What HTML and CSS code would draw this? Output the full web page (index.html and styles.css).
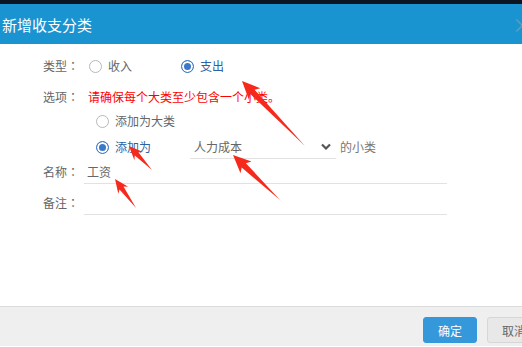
FILE: index.html
```html
<!DOCTYPE html>
<html lang="zh-CN">
<head>
    <meta charset="UTF-8">
    <meta name="viewport" content="width=device-width, initial-scale=1.0">
    <title>新增收支分类</title>
    <link rel="stylesheet" href="styles.css">
</head>
<body>
    <div class="page">
        <div class="topbar"></div>
        <div class="dialog">
            <div class="dialog-head">
                <span class="dialog-title">新增收支分类</span>
                <span class="close">×</span>
            </div>
            <div class="dialog-body">
                <div class="row row-type">
                    <span class="label">类型<span class="colon" lang="zh-TW">：</span></span>
                    <label class="opt opt-first"><span class="radio"></span>收入</label>
                    <label class="opt on"><span class="radio"></span>支出</label>
                </div>
                <div class="row row-tip">
                    <span class="label">选项<span class="colon" lang="zh-TW">：</span></span>
                    <span class="tip">请确保每个大类至少包含一个小类。</span>
                </div>
                <div class="row row-sub">
                    <span class="label"></span>
                    <label class="opt opt-sub"><span class="radio"></span>添加为大类</label>
                </div>
                <div class="row row-sub2">
                    <span class="label"></span>
                    <label class="opt opt-sub on"><span class="radio"></span>添加为</label>
                    <div class="select">
                        <span>人力成本</span>
                        <svg class="chevron" width="10" height="7" viewBox="0 0 10 7"><polyline points="1,1.5 5,5.5 9,1.5" fill="none" stroke="#555" stroke-width="2.2"/></svg>
                    </div>
                    <span class="suffix">的小类</span>
                </div>
                <div class="row row-name">
                    <span class="label">名称<span class="colon" lang="zh-TW">：</span></span>
                    <div class="field">工资</div>
                </div>
                <div class="row row-note">
                    <span class="label">备注<span class="colon" lang="zh-TW">：</span></span>
                    <div class="field"></div>
                </div>
            </div>
            <div class="dialog-foot">
                <button class="btn btn-ok">确定</button>
                <button class="btn btn-cancel">取消</button>
            </div>
        </div>

        <!-- red annotation arrows drawn on top of the dialog -->
        <svg class="marks" width="522" height="347" viewBox="0 0 522 347">
            <polygon points="242,81 260.3,88.3 254.6,89.7 305,146 250.3,93.9 248.8,99.5"/>
            <polygon points="233,155 251.5,161.6 245.9,163.2 280,200 241.7,167.6 240.5,173.2"/>
            <polygon points="129,146 143,151.9 138.4,152.2 152,170 134.8,155.6 134.4,160.2"/>
            <polygon points="115,179 128.1,186.8 123.5,186.4 136,208 119.5,189.4 118.3,193.8"/>
        </svg>
    </div>
</body>
</html>
```

FILE: styles.css
```css
body {
    margin: 0;
    font-family: "Noto Sans CJK SC", "Noto Sans", sans-serif;
    font-size: 12px;
    color: #666;
    background-color: #fff;
}
.page {
    position: relative;
    width: 522px;
    height: 347px;
    overflow: hidden;
}
.topbar {
    height: 4px;
    background-color: #0b1620;
}
.dialog {
    width: 560px;
}
.dialog-head {
    display: flex;
    align-items: center;
    justify-content: space-between;
    height: 40px;
    padding: 0 28px 0 2px;
    background-color: #1a93d1;
    color: #fff;
}
.dialog-title {
    font-size: 15px;
    line-height: 20px;
    margin-top: 1px;
}
.close {
    font-size: 20px;
    color: #5a9ec4;
}
.dialog-body {
    height: 252px;
    padding: 10px 0 0 43px;
}
.row {
    display: flex;
    align-items: center;
    height: 24px;
    line-height: 24px;
}
.row-tip { margin-top: 7px; }
.row-sub2 { margin-top: 2px; }
.row-name { margin-top: 1px; }
.row-note { margin-top: 7px; }
.label {
    width: 41px;
    flex-shrink: 0;
    color: #666;
}
.colon {
    font-family: "Noto Sans CJK TC", "Noto Sans CJK SC", sans-serif;
}
.opt {
    display: flex;
    align-items: center;
    color: #666;
}
.opt-first {
    margin-left: 5px;
    width: 92px;
}
.opt-sub {
    margin-left: 12px;
}
.opt.on {
    color: #2c5fa3;
}
.radio {
    width: 11px;
    height: 11px;
    border: 1px solid #b8b8b8;
    border-radius: 50%;
    margin-right: 6px;
    background-color: #fff;
}
.opt.on .radio {
    border-color: #3a78c8;
    background-color: #3a78c8;
    box-shadow: inset 0 0 0 2px #fff;
}
.tip {
    margin-left: 4px;
    color: #f00;
}
.select {
    display: flex;
    align-items: center;
    justify-content: space-between;
    width: 142px;
    height: 22px;
    margin-left: 39px;
    padding-left: 4px;
    border-bottom: 1px solid #e2e2e2;
    color: #666;
}
.chevron {
    margin-right: 5px;
}
.suffix {
    margin-left: 4px;
    color: #777;
}
.field {
    width: 360px;
    height: 22px;
    line-height: 22px;
    padding-left: 3px;
    border-bottom: 1px solid #e2e2e2;
    color: #666;
}
.dialog-foot {
    display: flex;
    justify-content: flex-end;
    gap: 10px;
    height: 40px;
    padding: 10px 19px 0 0;
    box-sizing: border-box;
    border-top: 1px solid #dcdcdc;
    background-color: #efefef;
}
.btn {
    width: 54px;
    height: 26px;
    padding: 0;
    border-radius: 3px;
    font-family: inherit;
    font-size: 12px;
}
.btn-ok {
    background-color: #3498db;
    border: 1px solid #3498db;
    color: #fff;
}
.btn-cancel {
    background-color: #e8e8e8;
    border: 1px solid #d6d6d6;
    color: #666;
}
.marks {
    position: absolute;
    top: 0;
    left: 0;
    fill: #f52a1c;
}
```
